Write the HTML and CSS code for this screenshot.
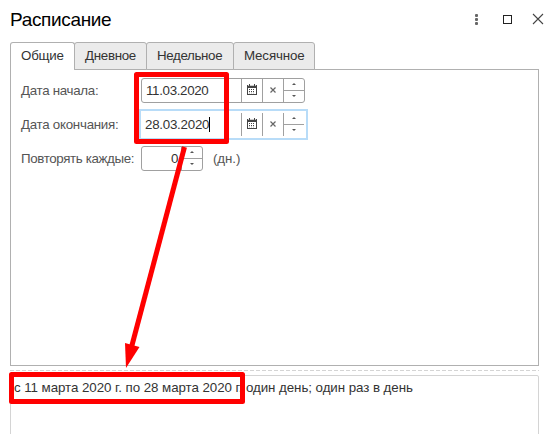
FILE: index.html
```html
<!DOCTYPE html>
<html lang="ru">
<head>
<meta charset="utf-8">
<title>Расписание</title>
<link rel="stylesheet" href="styles.css">
</head>
<body>
<main class="window">
  <header class="titlebar">
    <h1 class="title">Расписание</h1>
    <div class="controls">
      <svg class="ctl" width="14" height="14" viewBox="0 0 14 14" fill="#666"><rect x="6" y="2" width="3" height="3" rx="1"/><rect x="6" y="6" width="3" height="3" rx="1"/><rect x="6" y="10" width="3" height="3" rx="1"/></svg>
      <svg class="ctl" width="14" height="14" viewBox="0 0 14 14"><rect x="3.500" y="3.500" width="8" height="8" fill="none" stroke="#222"/></svg>
      <svg class="ctl" width="14" height="14" viewBox="0 0 14 14"><path d="M2 2L12 12M12 2L2 12" stroke="#444" stroke-width="1.100"/></svg>
    </div>
  </header>
  <nav class="tabs">
    <div class="tab active"><span class="t1">Общие</span></div>
    <div class="tab"><span class="t2">Дневное</span></div>
    <div class="tab wide"><span class="t3">Недельное</span></div>
    <div class="tab last"><span class="t4">Месячное</span></div>
  </nav>
  <section class="panel">
    <div class="row">
      <label class="label l1">Дата начала:</label>
      <div class="field">
        <span class="value">11.03.2020</span>
        <span class="cell"><svg width="10" height="11" viewBox="0 0 10 11"><path d="M0 1h10v10H0z" fill="#444"/><path d="M1 4h8v6H1z" fill="#fff"/><path d="M2 0h1v2H2zM7 0h1v2H7z" fill="#444"/><path d="M1 1h1v1H1zM3 1h4v1H3zM8 1h1v1H8z" fill="#ccc"/><path d="M2 5.500h6M2 7.500h6" stroke="#444" stroke-dasharray="1 1"/><path d="M2 9h6" stroke="#aaa" stroke-dasharray="1 1"/></svg></span>
        <span class="cell"><svg width="6" height="6" viewBox="0 0 6 6"><path d="M.5.5l5 5m0-5l-5 5" stroke="#666" stroke-width="1.200"/></svg></span>
        <span class="spin"><i class="up"></i><i class="down"></i></span>
      </div>
    </div>
    <div class="row">
      <label class="label l2">Дата окончания:</label>
      <div class="field focus">
        <span class="value">28.03.2020<b class="caret"></b></span>
        <span class="cell"><svg width="10" height="11" viewBox="0 0 10 11"><path d="M0 1h10v10H0z" fill="#444"/><path d="M1 4h8v6H1z" fill="#fff"/><path d="M2 0h1v2H2zM7 0h1v2H7z" fill="#444"/><path d="M1 1h1v1H1zM3 1h4v1H3zM8 1h1v1H8z" fill="#ccc"/><path d="M2 5.500h6M2 7.500h6" stroke="#444" stroke-dasharray="1 1"/><path d="M2 9h6" stroke="#aaa" stroke-dasharray="1 1"/></svg></span>
        <span class="cell"><svg width="6" height="6" viewBox="0 0 6 6"><path d="M.5.5l5 5m0-5l-5 5" stroke="#666" stroke-width="1.200"/></svg></span>
        <span class="spin"><i class="up"></i><i class="down"></i></span>
      </div>
    </div>
    <div class="row">
      <label class="label l3">Повторять каждые:</label>
      <div class="field small">
        <span class="value num">0</span>
        <span class="spin"><i class="up"></i><i class="down"></i></span>
      </div>
      <span class="unit">(дн.)</span>
    </div>
  </section>
  <div class="splitter"></div>
  <section class="summary"><span class="s">с 11 марта 2020 г. по 28 марта 2020 г. один день; один раз в день</span></section>
</main>
<svg class="marks" width="558" height="434" viewBox="0 0 558 434" fill="none" stroke="#f00" stroke-width="5" stroke-linejoin="round">
  <rect x="136.500" y="74.500" width="90" height="67"/>
  <rect x="11.500" y="374.500" width="231" height="27"/>
  <path d="M184.500 147L131 349"/>
  <path d="M125 343l14.500 4L126 368z" fill="#f00" stroke="none"/>
</svg>
</body>
</html>
```
FILE: styles.css
```css
* { box-sizing: border-box; }
body {
  margin: 0;
  background: #fff;
  color: #333;
  font: 13.33px/16px "Liberation Sans", Arial, sans-serif;
}
.window {
  width: 558px;
  height: 434px;
  overflow: hidden;
  display: flex;
  flex-direction: column;
  padding-left: 10px;
}
.titlebar {
  height: 42px;
  flex: none;
  display: flex;
  justify-content: space-between;
}
.title {
  margin: 8px 0 0;
  font-size: 19px;
  line-height: 24px;
  font-weight: 400;
  letter-spacing: -.35px;
  color: #000;
  white-space: nowrap;
}
.controls { display: flex; gap: 17px; padding: 12px 13px 0 0; }
.ctl { display: block; }
.tabs { display: flex; height: 28px; flex: none; position: relative; }
.tab {
  width: 73px;
  margin-right: -1px;
  height: 28px;
  border: 1px solid #b0b0b0;
  border-radius: 3px 3px 0 0;
  background: #ebebeb;
  padding: 5px 0 0 10px;
  white-space: nowrap;
}
.active { width: 65px; background: #fff; border-bottom: 0; }
.wide { width: 88px; }
.last { width: 82px; }
.t1 { letter-spacing: -.2px; }
.t2 { letter-spacing: -.3px; }
.t3 { letter-spacing: -.35px; }
.t4 { letter-spacing: -.15px; }
.panel {
  width: 529px;
  height: 297px;
  flex: none;
  margin-top: -1px;
  border: 1px solid #b0b0b0;
  padding: 3px 0 0 10px;
}
.row { display: flex; align-items: center; height: 34px; }
.label { width: 120px; flex: none; padding-top: 2px; color: #555; white-space: nowrap; }
.l1 { letter-spacing: -.3px; }
.l2 { letter-spacing: -.27px; }
.l3 { letter-spacing: -.37px; }
.field {
  display: flex;
  width: 164px;
  height: 25px;
  border: 1px solid #a0a0a0;
  border-radius: 3px;
}
.value { flex: 1; padding: 4px 0 0 4px; line-height: 16px; white-space: nowrap; letter-spacing: -.33px; }
.cell {
  width: 21px;
  border-left: 1px solid #a0a0a0;
  display: flex;
  align-items: center;
  justify-content: center;
}
.cell svg { margin: -1px 1px 0 0; }
.spin { width: 21px; border-left: 1px solid #a0a0a0; display: flex; flex-direction: column; align-items: center; }
.spin i { flex: 1; width: 100%; display: flex; align-items: center; justify-content: center; }
.up { border-bottom: 1px solid #a0a0a0; }
.spin i::before { content: ""; border: 2px solid transparent; }
.spin .up::before { border-top: 0; border-bottom-color: #555; }
.spin .down::before { border-bottom: 0; border-top-color: #555; }
.focus {
  width: 169px;
  height: 31px;
  margin-left: -2px;
  padding: 2px;
  border: 2px solid #b8dcf8;
  border-radius: 0;
}
.focus .value { padding-left: 2px; letter-spacing: -.25px; }
.caret { display: inline-block; width: 1px; height: 15px; background: #000; vertical-align: -3px; }
.small { width: 62px; }
.num { text-align: right; padding-right: 3px; }
.unit { margin-left: 10px; padding-top: 2px; color: #555; letter-spacing: -.1px; }
.splitter {
  height: 1px;
  flex: none;
  width: 529px;
  margin-top: 4px;
  background: repeating-linear-gradient(90deg, #d4d4d4 0 4px, #fff 4px 6px);
}
.summary {
  width: 529px;
  height: 70px;
  flex: none;
  margin-top: 4px;
  border: 1px solid #d4d4d4;
  border-radius: 2px;
  padding: 4px 0 0 3px;
  white-space: nowrap;
  letter-spacing: -.06px;
}
.marks { position: absolute; left: 0; top: 0; }
```
